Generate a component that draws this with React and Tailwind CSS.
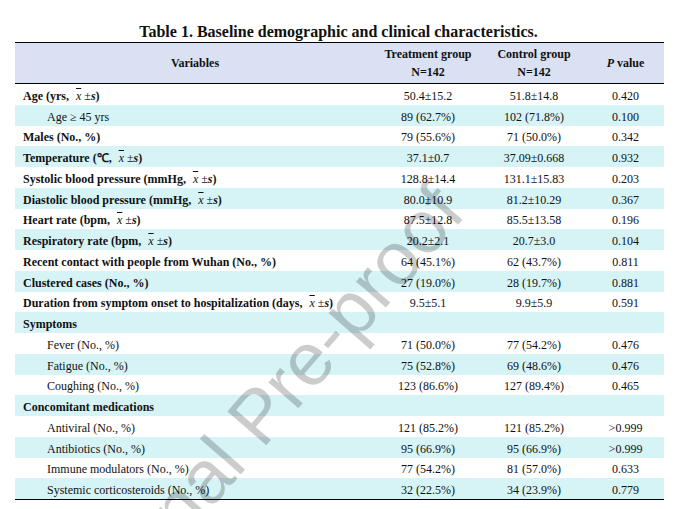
import React from "react"

// x̄ ±s marker used in several row labels
function MeanSd() {
    return (
        <span className="ml-[7px]">
            <span className="italic font-normal overline">x</span>
            <span className="font-normal"> ±</span>
            <span className="italic">s</span>)
        </span>
    )
}

const rows = [
    { label: <>Age (yrs,<MeanSd /></>, bold: true, t: "50.4±15.2", c: "51.8±14.8", p: "0.420" },
    { label: "Age ≥ 45 yrs", t: "89 (62.7%)", c: "102 (71.8%)", p: "0.100" },
    { label: "Males (No., %)", bold: true, t: "79 (55.6%)", c: "71 (50.0%)", p: "0.342" },
    { label: <>Temperature (℃,<MeanSd /></>, bold: true, t: "37.1±0.7", c: "37.09±0.668", p: "0.932" },
    { label: <>Systolic blood pressure (mmHg,<MeanSd /></>, bold: true, t: "128.8±14.4", c: "131.1±15.83", p: "0.203" },
    { label: <>Diastolic blood pressure (mmHg,<MeanSd /></>, bold: true, t: "80.0±10.9", c: "81.2±10.29", p: "0.367" },
    { label: <>Heart rate (bpm,<MeanSd /></>, bold: true, t: "87.5±12.8", c: "85.5±13.58", p: "0.196" },
    { label: <>Respiratory rate (bpm,<MeanSd /></>, bold: true, t: "20.2±2.1", c: "20.7±3.0", p: "0.104" },
    { label: "Recent contact with people from Wuhan (No., %)", bold: true, t: "64 (45.1%)", c: "62 (43.7%)", p: "0.811" },
    { label: "Clustered cases (No., %)", bold: true, t: "27 (19.0%)", c: "28 (19.7%)", p: "0.881" },
    { label: <>Duration from symptom onset to hospitalization (days,<MeanSd /></>, bold: true, t: "9.5±5.1", c: "9.9±5.9", p: "0.591" },
    { label: "Symptoms", bold: true, t: "", c: "", p: "" },
    { label: "Fever (No., %)", t: "71 (50.0%)", c: "77 (54.2%)", p: "0.476" },
    { label: "Fatigue (No., %)", t: "75 (52.8%)", c: "69 (48.6%)", p: "0.476" },
    { label: "Coughing (No., %)", t: "123 (86.6%)", c: "127 (89.4%)", p: "0.465" },
    { label: "Concomitant medications", bold: true, t: "", c: "", p: "" },
    { label: "Antiviral (No., %)", t: "121 (85.2%)", c: "121 (85.2%)", p: ">0.999" },
    { label: "Antibiotics (No., %)", t: "95 (66.9%)", c: "95 (66.9%)", p: ">0.999" },
    { label: "Immune modulators (No., %)", t: "77 (54.2%)", c: "81 (57.0%)", p: "0.633" },
    { label: "Systemic corticosteroids (No., %)", t: "32 (22.5%)", c: "34 (23.9%)", p: "0.779" },
]

export default function App() {
    return (
        <div className="relative w-[677px] h-[509px] bg-white overflow-hidden font-['Liberation_Serif',serif] text-[#111]">
            {/* TITLE */}
            <div className="pt-[22px] text-center text-[16px] leading-[20px] font-bold">
                Table 1. Baseline demographic and clinical characteristics.
            </div>

            {/* TABLE */}
            <div className="ml-[15px] w-[649px] border-t-[1.5px] border-b-[1.5px] border-black">
                <div className="grid grid-cols-[360px_106px_106px_77px] h-[41px] bg-[#d9e1f2] border-b border-black text-[12px] font-bold">
                    <div className="flex items-center justify-center">Variables</div>
                    <div className="flex flex-col items-center justify-between py-[3px] leading-[16px]">
                        <span>Treatment group</span>
                        <span>N=142</span>
                    </div>
                    <div className="flex flex-col items-center justify-between py-[3px] leading-[16px]">
                        <span>Control group</span>
                        <span>N=142</span>
                    </div>
                    <div className="flex items-center justify-center">
                        <span><span className="italic">P</span> value</span>
                    </div>
                </div>

                {rows.map((r, i) => (
                    <div
                        key={i}
                        className={`grid grid-cols-[360px_106px_106px_77px] h-[20.75px] pt-[3px] items-center text-[12px] leading-[14px] ${i % 2 === 1 ? "bg-[#d6f3f6]" : "bg-white"}`}
                    >
                        <div className={r.bold ? "pl-[8px] font-bold whitespace-nowrap" : "pl-[32px] whitespace-nowrap"}>{r.label}</div>
                        <div className="text-center">{r.t}</div>
                        <div className="text-center">{r.c}</div>
                        <div className="text-center">{r.p}</div>
                    </div>
                ))}
            </div>

            {/* WATERMARK */}
            <div className="absolute left-[258px] top-[416px] -translate-x-1/2 -translate-y-1/2 -rotate-[49deg] whitespace-nowrap font-['Liberation_Sans',sans-serif] text-[75px] leading-none text-black/20 pointer-events-none">
                Journal Pre-proof
            </div>
        </div>
    )
}
